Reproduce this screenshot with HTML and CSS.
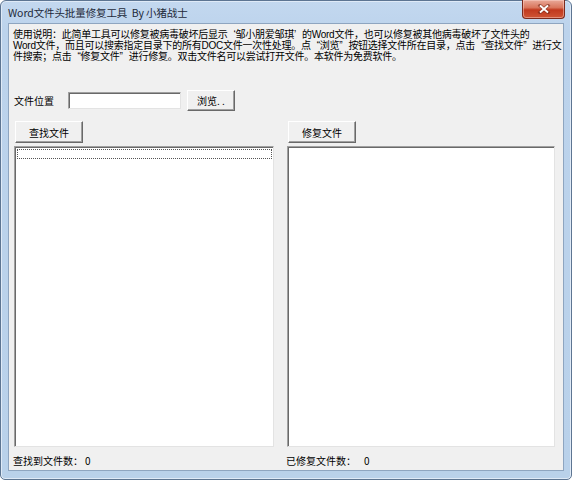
FILE: index.html
```html
<!DOCTYPE html>
<html lang="zh-CN">
<head>
<meta charset="utf-8">
<link rel="stylesheet" href="styles.css">
</head>
<body>
<div class="window">
  <div class="titlebar">
    <span class="title">Word文件头批量修复工具&nbsp; By 小猪战士</span>
    <div class="close">
      <svg width="14" height="10" viewBox="0 0 14 10"><path d="M3 1.5 L11 8.5 M11 1.5 L3 8.5" stroke="#6d2418" stroke-width="3.4" stroke-linecap="square" opacity="0.55"/><path d="M3 1.5 L11 8.5 M11 1.5 L3 8.5" stroke="#ffffff" stroke-width="1.8"/></svg>
    </div>
  </div>
  <div class="client">
    <div class="desc">
      <div class="line">使用说明：此简单工具可以修复被病毒破坏后显示<span class="qo">‘</span>邹小朋爱邹琪<span class="qc">’</span>的Word文件，也可以修复被其他病毒破坏了文件头的</div>
      <div class="line">Word文件，而且可以搜索指定目录下的所有DOC文件一次性处理。点<span class="qo">“</span>浏览<span class="qc">”</span>按钮选择文件所在目录，点击<span class="qo">“</span>查找文件<span class="qc">”</span>进行文</div>
      <div class="line">件搜索；点击<span class="qo">“</span>修复文件<span class="qc">”</span>进行修复。双击文件名可以尝试打开文件。本软件为免费软件。</div>
    </div>
    <div class="location">
      <span class="label">文件位置</span>
      <div class="input"></div>
      <div class="btn browse">浏览. .</div>
    </div>
    <div class="panes">
      <div class="pane left">
        <div class="btn action">查找文件</div>
        <div class="list"><div class="focusrow"></div></div>
        <div class="count">查找到文件数：<span class="num">0</span></div>
      </div>
      <div class="pane right">
        <div class="btn action">修复文件</div>
        <div class="list"></div>
        <div class="count">已修复文件数：<span class="num wide">0</span></div>
      </div>
    </div>
  </div>
</div>
</body>
</html>
```

FILE: styles.css
```css
* { box-sizing: border-box; }
html, body { margin: 0; padding: 0; background: #ffffff; }
body {
  font-family: "Noto Sans CJK SC", "Liberation Sans", sans-serif;
  font-size: 10px;
  color: #000;
}
.window {
  width: 572px;
  height: 480px;
  border: 1px solid #5d7592;
  border-radius: 6px 6px 5px 5px;
  background: linear-gradient(#c3d8ef 0px, #bcd3ec 30px, #b9d1ea 100%);
  box-shadow: inset 0 0 0 1px #dfeaf7;
  padding: 0 7px 8px 7px;
  display: flex;
  flex-direction: column;
}
.titlebar {
  height: 22px;
  display: flex;
  align-items: flex-start;
}
.title {
  font-family: "Noto Sans CJK SC", "Liberation Sans", sans-serif;
  font-size: 10.5px;
  line-height: 12px;
  margin-top: 6px;
  color: #1e2a3a;
  letter-spacing: -0.1px;
}
.close {
  margin-left: auto;
  margin-right: -1px;
  margin-top: -1px;
  width: 43px;
  height: 19px;
  border: 1px solid #7b2a1d;
  border-top: none;
  border-radius: 0 0 4px 4px;
  background: linear-gradient(#e9a999 0%, #d9765d 42%, #c1391e 55%, #cf5535 100%);
  box-shadow: inset 0 0 0 1px rgba(255,220,210,0.45);
  display: flex;
  align-items: center;
  justify-content: center;
}
.client {
  flex: 1;
  background: #f0f0f0;
  border: 1px solid #8ea5c0;
  display: flex;
  flex-direction: column;
  padding: 0 8px 0 4px;
}
.desc {
  margin: 5px 0 0 0;
  height: 33px;
  font-family: "Liberation Sans", "Noto Sans CJK SC", sans-serif;
  font-size: 10px;
  letter-spacing: -0.25px;
  white-space: nowrap;
}
.line {
  height: 11px;
  line-height: 11px;
}
.qo { padding-left: 6px; }
.qc { padding-right: 6px; }
.location {
  margin-top: 28px;
  display: flex;
  align-items: center;
  height: 21px;
}
.label {
  margin-left: 1px;
  width: 54px;
  font-size: 10px;
}
.input {
  width: 113px;
  height: 17px;
  background: #fff;
  border: 1px solid;
  border-color: #a0a0a0 #e3e3e3 #e3e3e3 #a0a0a0;
  box-shadow: inset 1px 1px 0 #696969;
}
.btn {
  background: #f0f0f0;
  border: 1px solid;
  border-color: #ffffff #696969 #696969 #ffffff;
  box-shadow: inset -1px -1px 0 #a0a0a0;
  display: flex;
  align-items: center;
  justify-content: center;
  font-size: 10px;
}
.browse {
  margin-left: 6px;
  width: 48px;
  height: 21px;
  padding-bottom: 1px;
}
.panes {
  margin-top: 10px;
  flex: 1;
  display: flex;
  padding-left: 1px;
}
.pane {
  display: flex;
  flex-direction: column;
}
.pane.left { width: 260px; }
.pane.right { width: 268px; margin-left: 13px; }
.action {
  width: 68px;
  height: 22px;
  margin-left: 1px;
}
.list {
  margin-top: 3px;
  height: 301px;
  background: #fff;
  border: 1px solid;
  border-color: #a0a0a0 #e3e3e3 #e3e3e3 #a0a0a0;
  box-shadow: inset 1px 1px 0 #696969;
  padding: 2px 1px 0 2px;
}
.focusrow {
  height: 10px;
  border: 1px dotted #555;
}
.count {
  margin-top: 8px;
  font-size: 10px;
  line-height: 12px;
  margin-left: -1px;
}
.num { margin-left: 2px; }
.num.wide { margin-left: 8px; }
```
